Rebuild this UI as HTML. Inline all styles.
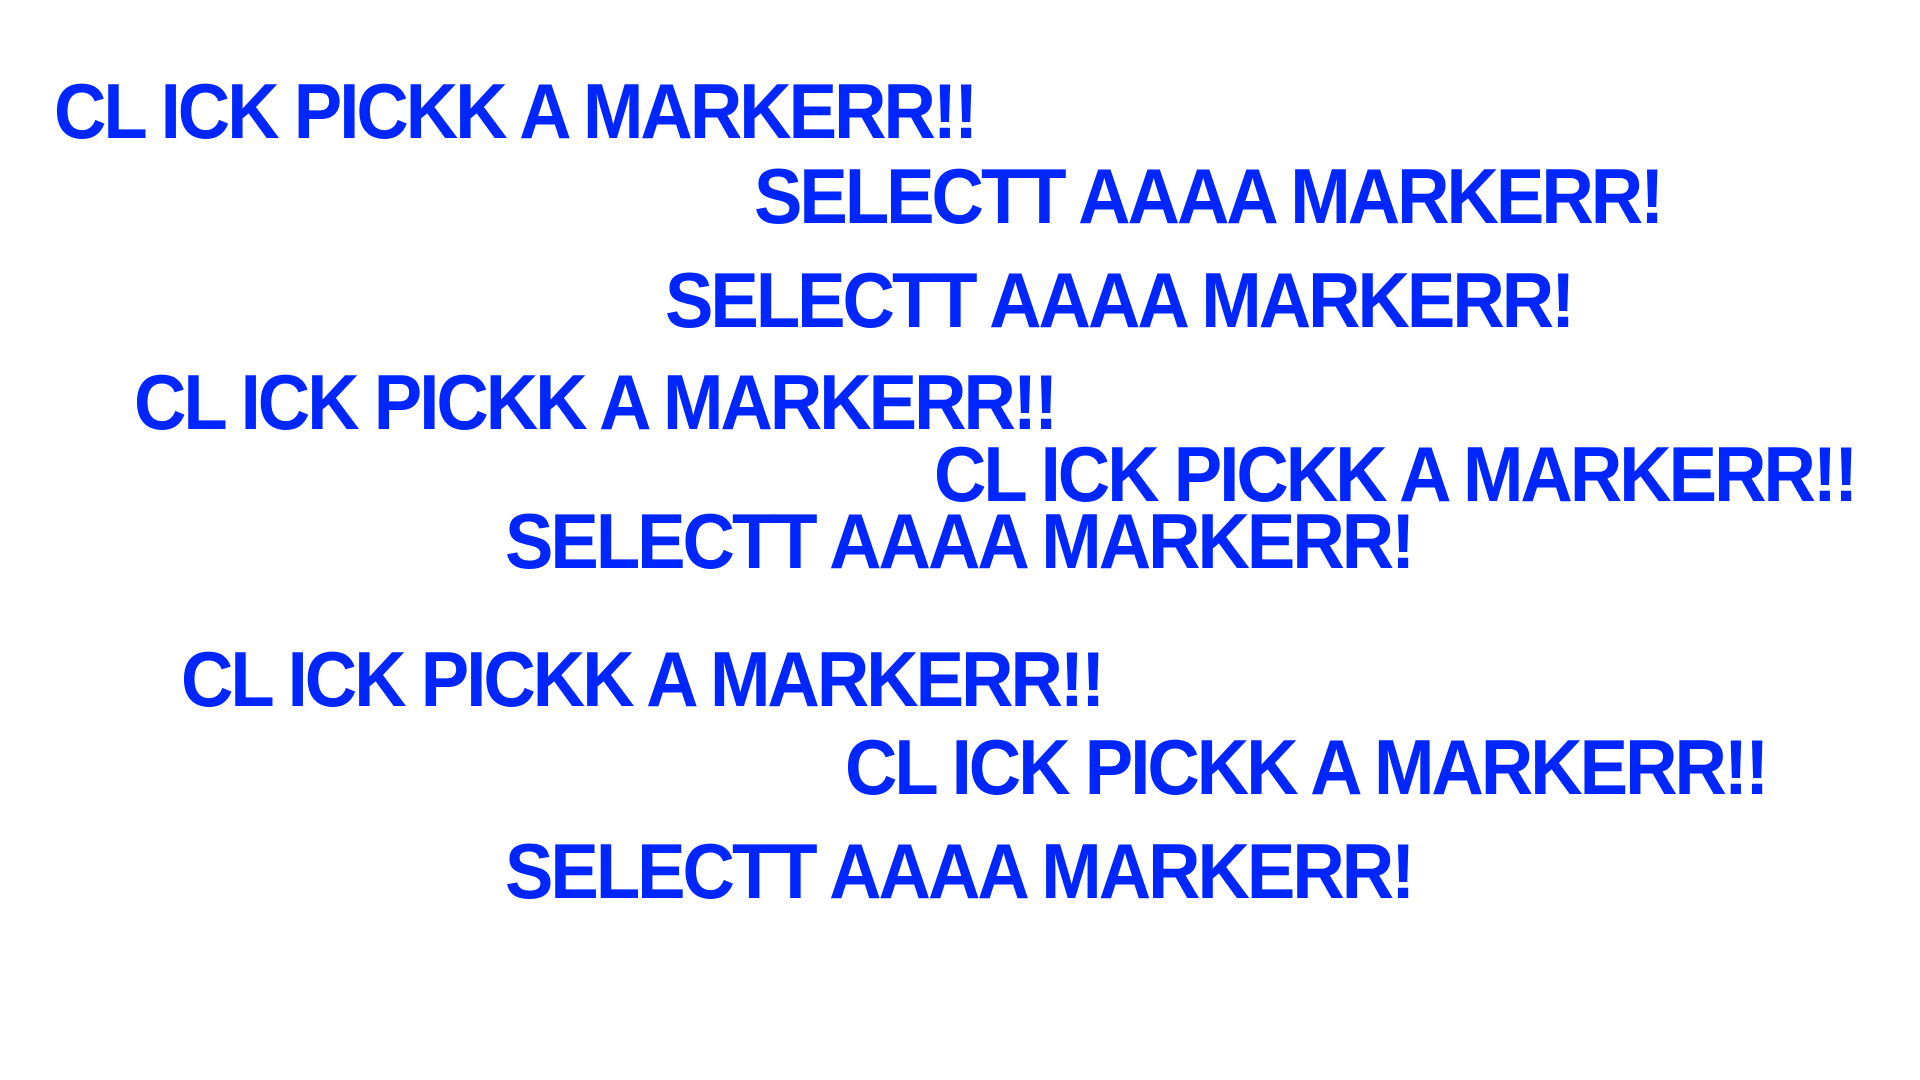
<!DOCTYPE html>
<html><head><meta charset="utf-8"><style>
html,body{margin:0;padding:0;background:#fff;width:1920px;height:1080px;overflow:hidden}
.t{position:absolute;font-family:"Liberation Sans",Arial,sans-serif;font-weight:bold;font-size:78px;line-height:1;letter-spacing:-3.2px;color:#0026ff;white-space:pre;transform:scaleX(0.93);transform-origin:0 0}
</style></head><body>
<div class="t" style="left:54px;top:72px">CL ICK PICKK A MARKERR!!</div>
<div class="t" style="left:754px;top:157px">SELECTT AAAA MARKERR!</div>
<div class="t" style="left:665px;top:261px">SELECTT AAAA MARKERR!</div>
<div class="t" style="left:134px;top:363px">CL ICK PICKK A MARKERR!!</div>
<div class="t" style="left:934px;top:435px">CL ICK PICKK A MARKERR!!</div>
<div class="t" style="left:505px;top:502px">SELECTT AAAA MARKERR!</div>
<div class="t" style="left:181px;top:640px">CL ICK PICKK A MARKERR!!</div>
<div class="t" style="left:845px;top:728px">CL ICK PICKK A MARKERR!!</div>
<div class="t" style="left:505px;top:832px">SELECTT AAAA MARKERR!</div>
</body></html>
